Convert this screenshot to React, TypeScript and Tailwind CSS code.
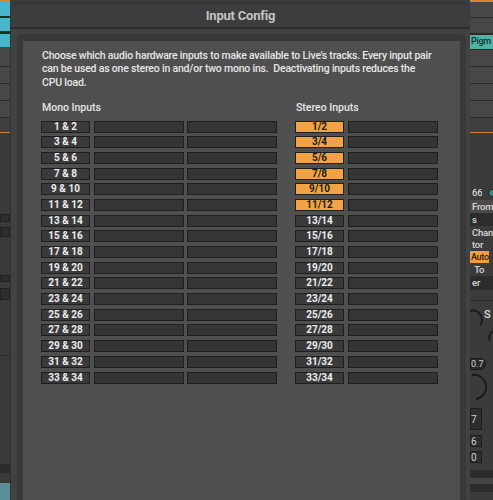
import React from "react";

const FONT = { fontFamily: "Roboto, 'Liberation Sans', Arial, sans-serif" };

function Line({ c = "bg-[#2c2c2c]" }: { c?: string }) {
  return <div className={`h-[1px] shrink-0 ${c}`} />;
}

function LeftStrip() {
  return (
    <div className="w-[10px] shrink-0 flex flex-col bg-[#3d3d3d] overflow-hidden">
      <div className="h-[2px] bg-[#d5852e]" />
      <div className="h-[14px] bg-[#46b6cc]" />
      <div className="h-[2px] bg-[#2a2a2a]" />
      <div className="h-[13px] bg-[#46b6cc]" />
      <div className="h-[3px] bg-[#2a2a2a]" />
      <div className="h-[13px] bg-[#46b6cc]" />
      <div className="h-[19px] bg-[#474747]" />
      <Line />
      <div className="h-[16px] bg-[#474747]" />
      <Line />
      <div className="h-[16px] bg-[#474747]" />
      <Line />
      <div className="h-[16px] bg-[#474747]" />
      <Line />
      <div className="h-[14px] bg-[#3e3e3e]" />
      <Line c="bg-[#d5852e]" />
      <div className="h-[81px] bg-[#3a3a3a]" />
      <div className="h-[8px] bg-[#2e2e2e] border border-[#222]" />
      <div className="h-[5px] bg-[#3a3a3a]" />
      <div className="h-[10px] bg-[#2e2e2e] border border-[#222]" />
      <div className="h-[38px] bg-[#3a3a3a]" />
      <div className="h-[7px] bg-[#2e2e2e] border border-[#222]" />
      <div className="h-[6px] bg-[#3a3a3a]" />
      <div className="h-[12px] bg-[#2e2e2e] border border-[#222]" />
      <div className="h-[55px] bg-[#3a3a3a]" />
      <Line />
      <div className="h-[108px] bg-[#3a3a3a]" />
      <div className="h-[9px] bg-[#2b2b2b]" />
      <div className="h-[10px] bg-[#3a3a3a]" />
      <div className="flex-1 bg-[#5a8f99]" />
    </div>
  );
}

function RightStrip() {
  const txt = "text-[9.5px] tracking-[-0.2px] font-medium text-[#d8d8d8] whitespace-nowrap pl-[2px] overflow-hidden";
  return (
    <div className="w-[23px] shrink-0 flex flex-col bg-[#3b3b3b] overflow-hidden" style={FONT}>
      <div className="h-[2px] bg-[#d5852e]" />
      <div className="h-[15px] bg-[#474747]" />
      <Line />
      <div className="h-[15px] bg-[#474747]" />
      <Line />
      <div className="h-[16px] bg-[#4fb3a6] border-y border-[#2a2a2a] flex items-center text-[9px] tracking-[-0.3px] font-medium text-[#14332f] pl-[1px] whitespace-nowrap overflow-hidden">
        Pigm
      </div>
      <div className="h-[16px] bg-[#474747]" />
      <Line />
      <div className="h-[16px] bg-[#474747]" />
      <Line />
      <div className="h-[16px] bg-[#474747]" />
      <Line />
      <div className="h-[16px] bg-[#474747]" />
      <Line />
      <div className="h-[14px] bg-[#3e3e3e]" />
      <Line c="bg-[#d5852e]" />
      <div className="h-[52px] bg-[#3b3b3b]" />
      <div className="h-[15px] flex items-center justify-between">
        <span className={`${txt} leading-[15px]`}>66</span>
        <span className="w-[8px] h-[8px] rounded-full bg-[#2f8c88] border border-[#1f1f1f] mr-[-3px]" />
      </div>
      <div className={`h-[13px] leading-[13px] bg-[#4a4a4a] ${txt}`}>From</div>
      <div className={`h-[13px] leading-[13px] bg-[#2c2c2c] ${txt}`}>s</div>
      <div className={`h-[13px] leading-[13px] ${txt}`}>Chan</div>
      <div className={`h-[11px] leading-[11px] ${txt}`}>tor</div>
      <div className="h-[13px] flex items-center">
        <div className="w-[19px] h-[12px] bg-[#f0a040] text-[9px] tracking-[-0.3px] leading-[12px] font-medium text-[#222] pl-[1px] overflow-hidden whitespace-nowrap">Auto</div>
      </div>
      <div className={`h-[13px] leading-[13px] ${txt}`}>&nbsp;To</div>
      <div className={`h-[14px] leading-[14px] bg-[#2c2c2c] ${txt}`}>er</div>
      <div className="h-[10px]" />
      <Line />
      <div className="h-[54px]">
        <svg width="23" height="54" viewBox="0 0 23 54">
          <path d="M 0 10 A 9 9 0 0 1 10 24" stroke="#1c1c1c" strokeWidth="2" fill="none" />
          <path d="M 20 40 A 8 8 0 0 1 23 30" stroke="#1c1c1c" strokeWidth="2" fill="none" />
          <text x="14" y="17" fontSize="11" fill="#d8d8d8" fontFamily="Roboto" fontWeight="500">S</text>
        </svg>
      </div>
      <div className="h-[18px] flex items-center">
        <div className="h-[12px] w-[16px] rounded-r-full bg-[#2a2a2a] border border-[#1a1a1a] text-[9px] leading-[10px] text-[#d0d0d0] flex items-center overflow-hidden whitespace-nowrap">0.7</div>
      </div>
      <div className="h-[32px]">
        <svg width="23" height="32" viewBox="0 0 23 32">
          <path d="M 2 2 A 12 12 0 0 1 6 26" stroke="#1c1c1c" strokeWidth="2" fill="none" />
        </svg>
      </div>
      <div className="h-[28px] flex items-center">
        <div className="h-[22px] w-[12px] bg-[#2e2e2e] border border-[#1e1e1e] text-[10px] text-[#ccc] flex items-center">7</div>
      </div>
      <div className="h-[16px] flex items-center">
        <div className="h-[12px] w-[12px] bg-[#2e2e2e] border border-[#1e1e1e] text-[10px] text-[#ccc] flex items-center">6</div>
      </div>
      <div className="h-[16px] flex items-center">
        <div className="h-[12px] w-[12px] bg-[#2e2e2e] border border-[#1e1e1e] text-[10px] text-[#ccc] flex items-center">0</div>
      </div>
      <div className="h-[5px]" />
      <div className="h-[8px] bg-[#2c2c2c]" />
      <div className="h-[6px] bg-[#444]" />
      <div className="h-[8px] bg-[#2c2c2c]" />
      <div className="flex-1 bg-[#3b3b3b]" />
    </div>
  );
}

function Cell({ label, on }: { label?: string; on?: boolean }) {
  if (label === undefined) {
    return <div className="w-[90px] h-[12px] bg-[#353535] border border-[#1f1f1f]" />;
  }
  return (
    <div
      className={`w-[49px] h-[12px] border border-[#1f1f1f] flex items-center justify-center text-[10px] leading-none font-bold ${
        on ? "bg-[#f2a444] text-[#1b1b1b]" : "bg-[#3a3a3a] text-[#ececec]"
      }`}
    >
      {label}
    </div>
  );
}

export default function App() {
  const pairs = Array.from({ length: 17 }, (_, i) => [i * 2 + 1, i * 2 + 2]);
  return (
    <div className="w-[493px] h-[500px] flex overflow-hidden bg-[#3b3b3b]" style={FONT}>
      <LeftStrip />
      <div className="w-[460px] shrink-0 flex flex-col pt-[3px] bg-[#3b3b3b]">
        <div className="flex-1 flex flex-col rounded-t-[9px] bg-[#424242] border-l border-t border-[#333] overflow-hidden">
          <div className="h-[23px] shrink-0 flex items-center justify-center bg-[#3d3d3d] text-[13px] font-bold text-[#c4c4c4] tracking-[-0.2px]">
            Input Config
          </div>
          <div className="h-[2px] shrink-0 bg-[#2b2b2b]" />
          <div className="flex-1 flex pt-[5px] pl-[6px] pr-[4px]">
            <div className="flex-1 flex rounded-t-[5px] bg-[#393939] pt-[7px] px-[6px]">
              <div className="flex-1 bg-[#4f4f4f] pl-[18px] pt-[7.5px]">
                <p className="text-[10.5px] leading-[13.5px] font-medium text-[#e6e6e6] whitespace-nowrap pl-[1px] tracking-[-0.2px]">
                  Choose which audio hardware inputs to make available to Live’s tracks. Every input pair
                  <br />
                  can be used as one stereo in and/or two mono ins.&nbsp; Deactivating inputs reduces the
                  <br />
                  CPU load.
                </p>
                <div className="flex gap-[18px] mt-[12px]">
                  <div className="flex flex-col">
                    <div className="text-[10.5px] leading-[13.5px] font-medium text-[#e6e6e6] pl-[1px] mb-[6px]">Mono Inputs</div>
                    <div className="flex flex-col gap-[3.7px]">
                      {pairs.map(([a, b]) => (
                        <div key={a} className="flex">
                          <Cell label={`${a} & ${b}`} />
                          <div className="w-[4px]" />
                          <Cell />
                          <div className="w-[3px]" />
                          <Cell />
                        </div>
                      ))}
                    </div>
                  </div>
                  <div className="flex flex-col">
                    <div className="text-[10.5px] leading-[13.5px] font-medium text-[#e6e6e6] pl-[1px] mb-[6px]">Stereo Inputs</div>
                    <div className="flex flex-col gap-[3.7px]">
                      {pairs.map(([a, b]) => (
                        <div key={a} className="flex gap-[4px]">
                          <Cell label={`${a}/${b}`} on={a <= 11} />
                          <Cell />
                        </div>
                      ))}
                    </div>
                  </div>
                </div>
              </div>
            </div>
          </div>
        </div>
      </div>
      <RightStrip />
    </div>
  );
}
